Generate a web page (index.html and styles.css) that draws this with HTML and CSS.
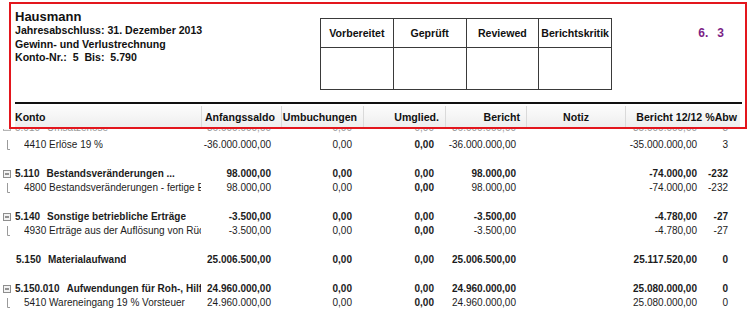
FILE: index.html
```html
<!DOCTYPE html>
<html lang="de">
<head>
<meta charset="utf-8">
<title>Hausmann – Gewinn- und Verlustrechnung</title>
<link rel="stylesheet" href="styles.css">
</head>
<body>
<div class="frame">
  <div class="top">
    <div class="info">
      <div class="title">Hausmann</div>
      <div class="line">Jahresabschluss: 31. Dezember 2013</div>
      <div class="line">Gewinn- und Verlustrechnung</div>
      <div class="line">Konto-Nr.:  5  Bis:  5.790</div>
    </div>
    <table class="signoff">
      <tr class="sh"><th>Vorbereitet</th><th>Geprüft</th><th>Reviewed</th><th>Berichtskritik</th></tr>
      <tr class="sb"><td></td><td></td><td></td><td></td></tr>
    </table>
    <div class="pageno"><span>6.</span><span>3</span></div>
  </div>
  <div class="rule"></div>
  <div class="colhead">
    <div class="hk">Konto</div>
    <div>Anfangssaldo</div>
    <div>Umbuchungen</div>
    <div>Umglied.</div>
    <div>Bericht</div>
    <div class="hc">Notiz</div>
    <div class="hl">Bericht 12/12 %Abw</div>
  </div>
</div>

<div class="data">
  <div class="row grp first">
    <div class="k"><svg class="mbox" width="8" height="8" viewBox="0 0 8 8"><rect x="0.5" y="0.5" width="7" height="7" fill="#f2f2f2" stroke="#b5b5b5"/><path d="M2 4H6" stroke="#888" stroke-width="1"/></svg><span class="code">5.010</span><span class="name">Umsatzerlöse</span></div>
    <div>-36.000.000,00</div><div>0,00</div><div>0,00</div><div>-36.000.000,00</div><div></div><div>-35.000.000,00</div><div>3</div>
  </div>
  <div class="row child">
    <div class="k"><svg class="conn" width="12" height="14" viewBox="0 0 12 14"><path d="M4.5 2V11.5H7" fill="none" stroke="#9a9a9a"/></svg><span class="name">4410 Erlöse 19 %</span></div>
    <div>-36.000.000,00</div><div>0,00</div><div>0,00</div><div>-36.000.000,00</div><div></div><div>-35.000.000,00</div><div>3</div>
  </div>
  <div class="spacer"></div>

  <div class="row grp">
    <div class="k"><svg class="mbox" width="8" height="8" viewBox="0 0 8 8"><rect x="0.5" y="0.5" width="7" height="7" fill="#f2f2f2" stroke="#8e8e8e"/><path d="M2 4H6" stroke="#333" stroke-width="1"/></svg><span class="code">5.110</span><span class="name">Bestandsveränderungen ...</span></div>
    <div>98.000,00</div><div>0,00</div><div>0,00</div><div>98.000,00</div><div></div><div>-74.000,00</div><div>-232</div>
  </div>
  <div class="row child">
    <div class="k"><svg class="conn" width="12" height="14" viewBox="0 0 12 14"><path d="M4.5 2V11.5H7" fill="none" stroke="#9a9a9a"/></svg><span class="name">4800 Bestandsveränderungen - fertige Erzeugnisse</span></div>
    <div>98.000,00</div><div>0,00</div><div>0,00</div><div>98.000,00</div><div></div><div>-74.000,00</div><div>-232</div>
  </div>
  <div class="spacer"></div>

  <div class="row grp">
    <div class="k"><svg class="mbox" width="8" height="8" viewBox="0 0 8 8"><rect x="0.5" y="0.5" width="7" height="7" fill="#f2f2f2" stroke="#8e8e8e"/><path d="M2 4H6" stroke="#333" stroke-width="1"/></svg><span class="code">5.140</span><span class="name">Sonstige betriebliche Erträge</span></div>
    <div>-3.500,00</div><div>0,00</div><div>0,00</div><div>-3.500,00</div><div></div><div>-4.780,00</div><div>-27</div>
  </div>
  <div class="row child">
    <div class="k"><svg class="conn" width="12" height="14" viewBox="0 0 12 14"><path d="M4.5 2V11.5H7" fill="none" stroke="#9a9a9a"/></svg><span class="name">4930 Erträge aus der Auflösung von Rückstellungen</span></div>
    <div>-3.500,00</div><div>0,00</div><div>0,00</div><div>-3.500,00</div><div></div><div>-4.780,00</div><div>-27</div>
  </div>
  <div class="spacer"></div>

  <div class="row grp">
    <div class="k noicon"><span class="code">5.150</span><span class="name">Materialaufwand</span></div>
    <div>25.006.500,00</div><div>0,00</div><div>0,00</div><div>25.006.500,00</div><div></div><div>25.117.520,00</div><div>0</div>
  </div>
  <div class="spacer"></div>

  <div class="row grp">
    <div class="k"><svg class="mbox" width="8" height="8" viewBox="0 0 8 8"><rect x="0.5" y="0.5" width="7" height="7" fill="#f2f2f2" stroke="#8e8e8e"/><path d="M2 4H6" stroke="#333" stroke-width="1"/></svg><span class="code">5.150.010</span><span class="name">Aufwendungen für Roh-, Hilfs- und Betriebsstoffe</span></div>
    <div>24.960.000,00</div><div>0,00</div><div>0,00</div><div>24.960.000,00</div><div></div><div>25.080.000,00</div><div>0</div>
  </div>
  <div class="row child">
    <div class="k"><svg class="conn" width="12" height="14" viewBox="0 0 12 14"><path d="M4.5 2V11.5H7" fill="none" stroke="#9a9a9a"/></svg><span class="name">5410 Wareneingang 19 % Vorsteuer</span></div>
    <div>24.960.000,00</div><div>0,00</div><div>0,00</div><div>24.960.000,00</div><div></div><div>25.080.000,00</div><div>0</div>
  </div>
</div>
</body>
</html>
```

FILE: styles.css
```css
html, body {
  margin: 0;
  padding: 0;
  background: #fff;
}
body {
  width: 755px;
  height: 314px;
  overflow: hidden;
  font-family: "Liberation Sans", Arial, sans-serif;
  color: #000;
}

/* ---------- framed report header ---------- */
.frame {
  margin: 2px 0 0 9px;
  width: 738px;
  height: 127px;
  box-sizing: border-box;
  border: 2px solid #e3161d;
  display: flex;
  flex-direction: column;
  background: #fff;
}
.top {
  height: 98px;
  display: flex;
  align-items: flex-start;
  padding-left: 4px;
}
.info {
  width: 305px;
  padding-top: 5px;
  font-weight: bold;
  color: #111;
}
.title {
  font-size: 13px;
  line-height: 15px;
}
.line {
  font-size: 10.6px;
  line-height: 13.5px;
  white-space: pre;
}

.signoff {
  margin-top: 14px;
  width: 292px;
  table-layout: fixed;
  border-collapse: collapse;
}
.signoff th,
.signoff td {
  border: 1px solid #3a3a3a;
  padding: 0;
  text-align: center;
  font-size: 10.6px;
  font-weight: bold;
  color: #111;
  white-space: nowrap;
}
.signoff .sh th { height: 28px; }
.signoff .sb td { height: 41px; }

.pageno {
  flex: 1;
  display: flex;
  justify-content: flex-end;
  gap: 9px;
  padding: 22px 21px 0 0;
  color: #7c1f86;
  font-weight: bold;
  font-size: 12px;
  line-height: 14px;
}

.rule {
  height: 2px;
  background: #111;
  margin: 0 3px 0 4px;
}

.colhead {
  margin: 2px 5px 0 4px;
  height: 21px;
  display: grid;
  grid-template-columns: 187px 80px 82px 82px 81px 99px 114px;
  background: linear-gradient(#fcfcfc, #eeeeee);
  font-size: 10.6px;
  font-weight: bold;
  color: #111;
}
.colhead > div {
  box-sizing: border-box;
  display: flex;
  align-items: center;
  justify-content: flex-end;
  padding-right: 6px;
  border-right: 1px solid #dadada;
  white-space: nowrap;
}
.colhead > .hk { justify-content: flex-start; }
.colhead > .hc { justify-content: center; padding-right: 0; }
.colhead > .hl { padding-right: 3px; border-right: 0; }

/* ---------- scrolled data ---------- */
.data {
  height: 185px;
  overflow: hidden;
  font-size: 10px;
  color: #1c1c1c;
}
.row {
  display: grid;
  grid-template-columns: 201px 81px 82px 82px 81px 99px 82px 32px;
  height: 14px;
  line-height: 14px;
  white-space: nowrap;
}
.row.grp {
  height: 15px;
  line-height: 15px;
  font-weight: bold;
}
.row.first {
  margin-top: -9px;
  height: 18px;
  line-height: 15px;
  font-weight: normal;
  color: #9a9a9a;
}
.row > div {
  box-sizing: border-box;
  text-align: right;
}
.row > div:nth-child(2) { padding-right: 11px; }
.row > div:nth-child(3) { padding-right: 12px; }
.row > div:nth-child(4) { padding-right: 12px; font-weight: bold; }
.row > div:nth-child(5) { padding-right: 11px; }
.row > div:nth-child(7) { padding-right: 11px; }
.row > div:nth-child(8) { padding-right: 12px; }
.row.first > div:nth-child(4) { font-weight: normal; }

.row > .k {
  display: flex;
  align-items: center;
  overflow: hidden;
  min-width: 0;
  text-align: left;
}
.row.first > .k { align-items: flex-start; }
.mbox {
  flex: none;
  margin-left: 3px;
  margin-right: 4px;
  margin-top: 3px;
}
.row:not(.first) .mbox { margin-top: 0; }
.conn {
  flex: none;
  margin-left: 3px;
  margin-right: 9px;
}
.k.noicon { padding-left: 16px; }
.code { flex: none; margin-right: 7px; }
.name {
  flex: 0 1 auto;
  min-width: 0;
  overflow: hidden;
  text-overflow: clip;
}

.spacer { height: 14px; }
```
